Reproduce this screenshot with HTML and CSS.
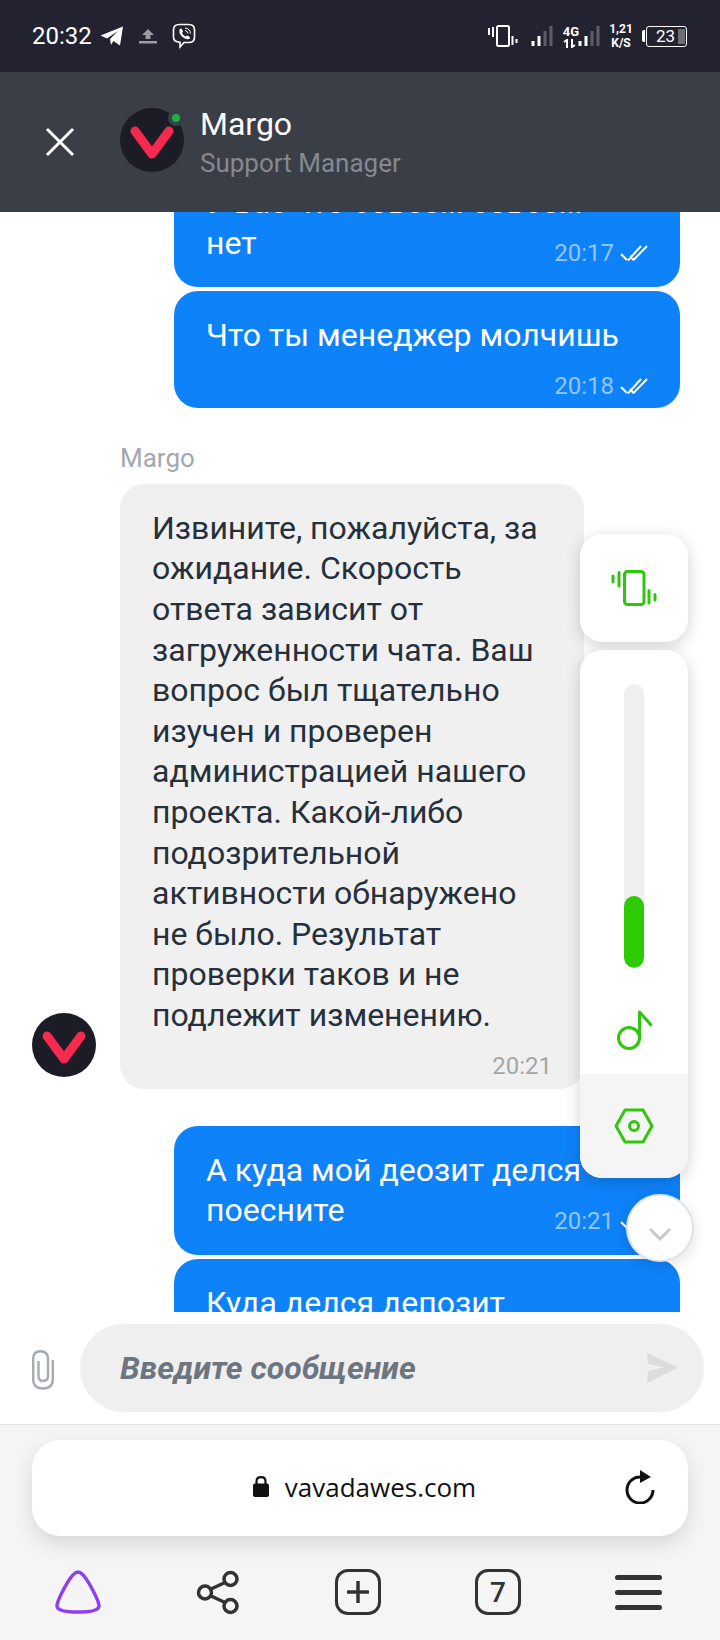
FILE: index.html
```html
<!DOCTYPE html>
<html lang="ru">
<head>
<title>Margo</title>
<meta charset="UTF-8">
<meta name="viewport" content="width=device-width, initial-scale=1">
<link rel="stylesheet" href="styles.css">
</head>
<body>

<svg class="defs" width="0" height="0">
  <symbol id="logo" viewBox="0 0 64 64">
    <circle cx="32" cy="32" r="32" fill="#1b1c25"/>
    <path d="M15 23 L32 46 L49 23" fill="none" stroke="#f6294f" stroke-width="9" stroke-linecap="round" stroke-linejoin="round"/>
  </symbol>
  <symbol id="ticks" viewBox="0 0 28 16">
    <path d="M1 9 L7 15 M8 15.500 L21 1 M10 11 L13.500 15 L27 1" fill="none" stroke="#fff" stroke-width="2"/>
  </symbol>
</svg>

<div class="statusbar">
  <div class="status-left">
    <span class="clock">20:32</span>
    <svg class="ic-tg" width="24" height="20" viewBox="0 0 24 20"><path d="M0.500 9.500 L23 0.500 L20 19.500 L13.500 15 L11 19 L10 13 L18 5 L7 12.500 Z" fill="#fff"/></svg>
    <svg class="ic-up" width="20" height="16" viewBox="0 0 20 16"><path d="M10 1 L16 7 L12.500 7 L12.500 11 L7.500 11 L7.500 7 L4 7 Z M1 13 H19 V15.500 H1 Z" fill="#9c9ca4"/></svg>
    <svg class="ic-viber" width="24" height="26" viewBox="0 0 24 26"><path d="M7 1.500 H17 Q22.500 1.500 22.500 7 V14 Q22.500 19.500 17 19.500 H12 L8 24 V19.300 Q1.500 19 1.500 14 V7 Q1.500 1.500 7 1.500 Z" fill="none" stroke="#fff" stroke-width="1.600"/><path d="M7.500 6 L9.500 5.500 L11 8.500 L10 10 Q11 12.500 13.500 13.500 L15 12.500 L18 14 L17.500 16 Q11 17 7.500 10 Z" fill="#fff"/><path d="M13 5 Q18 5.500 18.500 10.500 M13 7.500 Q15.700 7.800 16 10.500" fill="none" stroke="#fff" stroke-width="1"/></svg>
  </div>
  <div class="status-right">
    <svg width="30" height="22" viewBox="0 0 30 22"><path d="M1 3 V10 M5 2 V12 M24.500 11 V20 M28.500 14 V18" stroke="#fff" stroke-width="2" fill="none"/><rect x="9" y="1" width="12" height="20" rx="1.500" fill="none" stroke="#fff" stroke-width="2"/></svg>
    <svg class="ic-signal" width="22" height="22" viewBox="0 0 22 22"><rect x="0.500" y="16" width="3" height="5" fill="#fff"/><rect x="6.500" y="11" width="3" height="10" fill="#fff"/><rect x="12.500" y="6" width="3" height="15" fill="#5e5e69"/><rect x="18.500" y="1" width="3" height="20" fill="#5e5e69"/></svg>
    <div class="net">
      <span class="net-label">4G</span>
      <svg class="net-arrows" width="18" height="9" viewBox="0 0 18 9"><path d="M5 9 V1 L2 3 M10 0 V8 L13 6" stroke="#fff" stroke-width="2" fill="none"/></svg>
    </div>
    <svg class="ic-signal2" width="22" height="22" viewBox="0 0 22 22"><rect x="0.500" y="16" width="3" height="5" fill="#fff"/><rect x="6.500" y="11" width="3" height="10" fill="#fff"/><rect x="12.500" y="6" width="3" height="15" fill="#5e5e69"/><rect x="18.500" y="1" width="3" height="20" fill="#5e5e69"/></svg>
    <div class="speed"><span>1,21</span><span>K/S</span></div>
    <div class="battery">
      <span class="battery-cap"></span>
      <div class="battery-body"><span>23</span><i class="battery-level"></i></div>
    </div>
  </div>
</div>

<div class="chat-head">
  <svg class="close" width="30" height="30" viewBox="0 0 30 30"><path d="M2 2 L28 28 M28 2 L2 28" stroke="#fff" stroke-width="3" fill="none"/></svg>
  <div class="head-avatar">
    <svg width="64" height="64"><use href="#logo"/></svg>
    <span class="online"></span>
  </div>
  <div class="head-text">
    <div class="head-name">Margo</div>
    <div class="head-role">Support Manager</div>
  </div>
</div>

<div class="chat">
  <div class="messages">
    <div class="bubble mine">
      <p>У вас что совсем совсем<br>нет</p>
      <div class="meta tight"><span>20:17</span><svg width="28" height="16"><use href="#ticks"/></svg></div>
    </div>
    <div class="bubble mine">
      <p>Что ты менеджер молчишь</p>
      <div class="meta"><span>20:18</span><svg width="28" height="16"><use href="#ticks"/></svg></div>
    </div>

    <div class="sender">Margo</div>
    <div class="incoming">
      <svg class="incoming-avatar" width="64" height="64"><use href="#logo"/></svg>
      <div class="bubble theirs">
        <p>Извините, пожалуйста, за ожидание. Скорость ответа зависит от загруженности чата. Ваш вопрос был тщательно изучен и проверен администрацией нашего проекта. Какой-либо подозрительной активности обнаружено не было. Результат проверки таков и не подлежит изменению.</p>
        <div class="meta"><span>20:21</span></div>
      </div>
    </div>

    <div class="bubble mine after-incoming">
      <p>А куда мой деозит делся<br>поесните</p>
      <div class="meta tight"><span>20:21</span><svg width="28" height="16"><use href="#ticks"/></svg></div>
    </div>
    <div class="bubble mine">
      <p>Куда делся депозит</p>
    </div>
  </div>

  <!-- floating sound panel -->
  <div class="volume">
    <div class="vol-card vol-mode">
      <svg width="46" height="38" viewBox="0 0 46 38"><path d="M2 7 V13 M8 3.500 V17 M38 21.500 V34 M44 25.500 V31" stroke="#2ec70c" stroke-width="3" stroke-linecap="round" fill="none"/><rect x="13.500" y="2.500" width="19.500" height="33" rx="3" fill="none" stroke="#2ec70c" stroke-width="3"/></svg>
    </div>
    <div class="vol-card vol-main">
      <div class="vol-top">
        <div class="track"><div class="fill"></div></div>
        <svg class="note" width="36" height="42" viewBox="0 0 36 42"><circle cx="13" cy="29" r="10.500" fill="none" stroke="#2ec70c" stroke-width="3"/><path d="M23.500 29 V3 L35 16" fill="none" stroke="#2ec70c" stroke-width="3" stroke-linecap="round" stroke-linejoin="round"/></svg>
      </div>
      <div class="vol-bottom">
        <svg width="40" height="36" viewBox="0 0 40 36"><path d="M11 2 H29 L38 18 L29 34 H11 L2 18 Z" fill="none" stroke="#2ec70c" stroke-width="3" stroke-linejoin="round"/><circle cx="20" cy="18" r="4.500" fill="none" stroke="#2ec70c" stroke-width="3"/></svg>
      </div>
    </div>
  </div>

  <div class="scroll-down">
    <svg width="24" height="14" viewBox="0 0 24 14"><path d="M2 2 L12 12 L22 2" fill="none" stroke="#c8c8cc" stroke-width="3"/></svg>
  </div>
</div>

<div class="composer">
  <svg class="clip" width="22" height="40" viewBox="0 0 22 40"><path d="M20.800 10 V29 Q20.800 38.500 11 38.500 Q1.200 38.500 1.200 29 V9 Q1.200 1.200 8.500 1.200 Q16 1.200 16 9 V26 Q16 31 11 31 Q6.500 31 6.500 26 V11" fill="none" stroke="#a5abb5" stroke-width="2.400"/></svg>
  <div class="input">
    <span>Введите сообщение</span>
    <svg width="32" height="32" viewBox="0 0 32 32"><path d="M1 1 L32 15.500 L1 31 L2 19 L18 15.500 L2 12 Z" fill="#dcdcdc"/></svg>
  </div>
</div>

<div class="browser">
  <div class="urlbar">
    <div class="url">
      <svg width="16" height="21" viewBox="0 0 16 21"><rect y="7.500" width="16" height="13.500" rx="2" fill="#111"/><path d="M3.500 9 V5.500 Q3.500 1.200 8 1.200 Q12.500 1.200 12.500 5.500 V9" fill="none" stroke="#111" stroke-width="2.200"/></svg>
      <span>vavadawes.com</span>
    </div>
    <svg class="reload" width="30" height="34" viewBox="0 0 30 34"><path d="M15 7 A13 13 0 1 0 28 20" fill="none" stroke="#111" stroke-width="3"/><path d="M15 0 L26 7 L15 13 Z" fill="#111"/></svg>
  </div>
  <div class="toolbar">
    <div class="tool">
      <svg width="46" height="44" viewBox="0 0 46 44"><path d="M23 2 C27 2 31 8 35 15 C40 24 44 32 44 36 C44 41 33 42 23 42 C13 42 2 41 2 36 C2 32 6 24 11 15 C15 8 19 2 23 2 Z" fill="none" stroke="#8f3ff2" stroke-width="3.500"/></svg>
    </div>
    <div class="tool">
      <svg width="44" height="46" viewBox="0 0 44 46"><g fill="none" stroke="#333" stroke-width="3.500"><circle cx="34.500" cy="10" r="6.500"/><circle cx="34.500" cy="37" r="6.500"/><circle cx="9" cy="23.500" r="6.500"/><path d="M15 20 L29 13.500 M15 27 L29 33.500"/></g></svg>
    </div>
    <div class="tool">
      <div class="tool-box"><svg width="22" height="22" viewBox="0 0 22 22"><path d="M11 1 V21 M1 11 H21" stroke="#333" stroke-width="3.500" stroke-linecap="round"/></svg></div>
    </div>
    <div class="tool">
      <div class="tool-box">7</div>
    </div>
    <div class="tool">
      <div class="burger"><i></i><i></i><i></i></div>
    </div>
  </div>
</div>

</body>
</html>
```
FILE: styles.css
```css
* {
  box-sizing: border-box;
}

body {
  margin: 0;
  width: 720px;
  height: 1640px;
  overflow: hidden;
  font-family: Roboto, "Liberation Sans", sans-serif;
  background: #fff;
  display: flex;
  flex-direction: column;
}

.defs {
  position: absolute;
}

/* Status bar */
.statusbar {
  height: 72px;
  flex: none;
  background: #222230;
  color: #fff;
  display: flex;
  justify-content: space-between;
  align-items: center;
  padding: 0 33px 0 32px;
}

.status-left,
.status-right {
  display: flex;
  align-items: center;
}

.clock {
  font-size: 24px;
  margin-right: 8px;
}

.ic-up {
  margin: 0 14px 0 14px;
}

.status-right svg {
  flex: none;
}

.ic-signal {
  margin: 0 9px 0 13px;
}

.net {
  display: flex;
  flex-direction: column;
  align-items: center;
  width: 18px;
}

.net-label {
  font-size: 13px;
  font-weight: 700;
  line-height: 13px;
}

.net-arrows {
  margin-top: 1px;
}

.ic-signal2 {
  margin-left: -2px;
}

.speed {
  width: 24px;
  display: flex;
  flex-direction: column;
  align-items: center;
  font-size: 12px;
  font-weight: 700;
  line-height: 14px;
  margin: 0 9px 0 9px;
}

.battery {
  display: flex;
  align-items: center;
}

.battery-cap {
  width: 3px;
  height: 12px;
  background: #fff;
  border-radius: 2px 0 0 2px;
  margin-right: 1px;
}

.battery-body {
  width: 41px;
  height: 21px;
  border: 1.5px solid #fff;
  border-radius: 3px;
  display: flex;
  justify-content: space-between;
  align-items: center;
  padding: 1px 1px 1px 9px;
  font-size: 17px;
}

.battery-level {
  width: 7px;
  height: 15px;
  background: #6d6d78;
}

/* Chat header */
.chat-head {
  height: 140px;
  flex: none;
  background: #3a3e46;
  display: flex;
  align-items: center;
  padding-left: 45px;
}

.head-avatar {
  position: relative;
  width: 64px;
  height: 64px;
  margin: -4px 0 0 45px;
}

.online {
  position: absolute;
  top: 2px;
  right: 0;
  width: 16px;
  height: 16px;
  border-radius: 50%;
  background: #1fb141;
  border: 4px solid #3a3e46;
}

.head-text {
  margin-left: 16px;
  margin-top: 4px;
}

.head-name {
  font-size: 32px;
  line-height: 39px;
  color: #fff;
}

.head-role {
  font-size: 26px;
  line-height: 39px;
  color: #85898f;
}

/* Messages */
.chat {
  position: relative;
  height: 1100px;
  flex: none;
  overflow: hidden;
}

.messages {
  margin-top: -54px;
  display: flex;
  flex-direction: column;
  align-items: flex-end;
  padding: 0 40px 0 32px;
}

.bubble {
  border-radius: 24px;
  font-size: 32px;
  line-height: 40.600px;
}

.bubble p {
  margin: 0;
}

.mine {
  width: 506px;
  background: #0e82f9;
  color: #fff;
  padding: 24px 32px;
  margin-bottom: 4px;
}

.meta {
  display: flex;
  justify-content: flex-end;
  align-items: center;
  height: 30px;
  margin-top: 15px;
  margin-bottom: -17px;
  font-size: 24px;
  line-height: 30px;
  color: #93c6fb;
}

.meta.tight {
  margin-top: -25px;
  margin-bottom: -5px;
}

.meta svg {
  margin-left: 6px;
}

.sender {
  align-self: flex-start;
  margin: 31px 0 11px 88px;
  font-size: 26px;
  line-height: 30px;
  color: #a1a8b2;
}

.incoming {
  align-self: stretch;
  display: flex;
  align-items: flex-end;
}

.incoming-avatar {
  margin-bottom: 12px;
  flex: none;
}

.theirs {
  width: 464px;
  margin-left: 24px;
  background: #f0f0f0;
  color: #26303c;
  padding: 24px 32px 0;
}

.theirs .meta {
  color: #a6a6a6;
  margin-top: 15px;
  margin-bottom: 8px;
}

.after-incoming {
  margin-top: 37px;
}

/* Sound panel lying over the messages */
.volume {
  position: absolute;
  left: 580px;
  top: 322px;
  width: 108px;
  display: flex;
  flex-direction: column;
  gap: 8px;
}

.vol-card {
  background: #fff;
  border-radius: 22px;
  box-shadow: 0 4px 16px rgba(0, 0, 0, .18);
  overflow: hidden;
}

.vol-mode {
  height: 108px;
  display: flex;
  align-items: center;
  justify-content: center;
}

.vol-top {
  height: 424px;
  padding-top: 34px;
  display: flex;
  flex-direction: column;
  align-items: center;
}

.track {
  width: 20px;
  height: 284px;
  border-radius: 10px;
  background: #efefef;
  position: relative;
  overflow: hidden;
  flex: none;
}

.fill {
  position: absolute;
  left: 0;
  right: 0;
  bottom: 0;
  height: 72px;
  border-radius: 10px;
  background: #2ecb05;
}

.note {
  margin-top: 41px;
}

.vol-bottom {
  height: 104px;
  background: #f5f5f5;
  display: flex;
  align-items: center;
  justify-content: center;
}

.scroll-down {
  position: absolute;
  left: 626px;
  top: 982px;
  width: 68px;
  height: 68px;
  border-radius: 50%;
  background: #fff;
  border: 2px solid #dde3ec;
  box-shadow: 0 4px 14px rgba(0, 0, 0, .12);
  display: flex;
  align-items: center;
  justify-content: center;
  padding-top: 12px;
}

/* Message input */
.composer {
  height: 113px;
  flex: none;
  display: flex;
  align-items: flex-start;
  padding: 12px 16px 0 32px;
  border-bottom: 1px solid #e2e2e2;
}

.clip {
  margin-top: 26px;
  flex: none;
}

.input {
  margin-left: 26px;
  flex: 1;
  height: 88px;
  border-radius: 44px;
  background: #efefef;
  display: flex;
  align-items: center;
  justify-content: space-between;
  padding: 0 26px 0 40px;
  font-size: 32px;
  font-weight: 700;
  font-style: italic;
  color: #6d7580;
}

/* Browser chrome */
.browser {
  flex: 1;
  background: #f5f5f5;
  padding: 15px 32px 0;
}

.urlbar {
  height: 96px;
  background: #fff;
  border-radius: 28px;
  box-shadow: 0 8px 20px rgba(0, 0, 0, .12);
  display: flex;
  align-items: center;
  position: relative;
}

.url {
  flex: 1;
  display: flex;
  align-items: center;
  justify-content: center;
  gap: 16px;
  padding-left: 9px;
  margin-top: -3px;
  font-size: 26px;
  color: #111;
  font-family: "Open Sans", sans-serif;
}

.reload {
  position: absolute;
  right: 33px;
  top: 30px;
}

.toolbar {
  display: grid;
  grid-template-columns: repeat(5, 140px);
  margin: 33px 0 0 -24px;
}

.tool {
  display: flex;
  justify-content: center;
  align-items: center;
  height: 46px;
}

.tool-box {
  width: 46px;
  height: 46px;
  border: 3.500px solid #333;
  border-radius: 13px;
  display: flex;
  align-items: center;
  justify-content: center;
  font-size: 28px;
  font-weight: 500;
  color: #333;
}

.burger {
  width: 47px;
  display: flex;
  flex-direction: column;
  gap: 10px;
}

.burger i {
  display: block;
  height: 5px;
  border-radius: 3px;
  background: #333;
}
```
